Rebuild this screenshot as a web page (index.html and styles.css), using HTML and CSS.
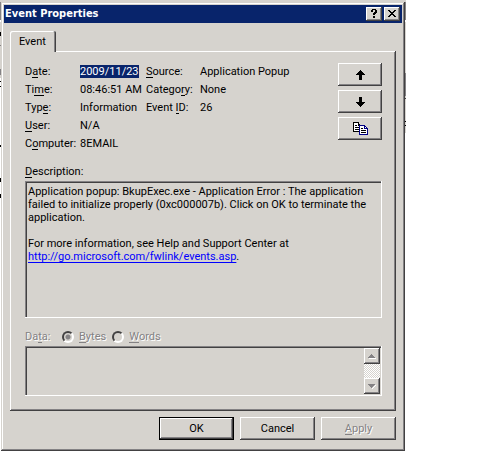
FILE: index.html
```html
<!DOCTYPE html>
<html lang="en">
<head>
<meta charset="utf-8">
<title>Event Properties</title>
<link rel="stylesheet" href="styles.css">
</head>
<body>
<main class="desktop">
<form class="window">
  <header class="titlebar">
    <h1 class="title">Event Properties</h1>
    <button type="button" class="caption-button" aria-label="Help">
      <svg width="12" height="10" viewBox="0 0 12 10" shape-rendering="crispEdges"><path d="M4 0h4v1h1v3h-1v1h-1v1h-2v-2h1v-1h1v-2h-2v2h-2v-2h1zM5 7h2v2h-2z"/></svg>
    </button>
    <button type="button" class="caption-button" aria-label="Close">
      <svg width="12" height="10" viewBox="0 0 12 10" shape-rendering="crispEdges"><path d="M2 1h2v1h1v1h2v-1h1v-1h2v1h-1v1h-1v1h-1v1h1v1h1v1h1v1h-2v-1h-1v-1h-2v1h-1v1h-2v-1h1v-1h1v-1h1v-1h-1v-1h-1v-1h-1z"/></svg>
    </button>
  </header>
  <div class="content">
    <div class="tabs" role="tablist">
      <button type="button" class="tab" role="tab" aria-selected="true">Event</button>
    </div>
    <section class="panel">
      <div class="summary">
        <dl class="facts">
          <dt>D<u>a</u>te:</dt><dd><span class="selected">2009/11/23</span></dd>
          <dt><u>S</u>ource:</dt><dd>Application Popup</dd>
          <dt>Ti<u>m</u>e:</dt><dd>08:46:51 AM</dd>
          <dt>Catego<u>r</u>y:</dt><dd>None</dd>
          <dt>Typ<u>e</u>:</dt><dd>Information</dd>
          <dt>Event <u>I</u>D:</dt><dd>26</dd>
          <dt><u>U</u>ser:</dt><dd class="wide">N/A</dd>
          <dt>C<u>o</u>mputer:</dt><dd class="wide">8EMAIL</dd>
        </dl>
        <div class="tools">
          <button type="button" class="button" aria-label="Previous event">
            <svg width="9" height="10" viewBox="0 0 9 10" shape-rendering="crispEdges"><path d="M4 0h1v1h1v1h1v1h1v1h1v1h-3v5h-3v-5h-3v-1h1v-1h1v-1h1v-1h1z"/></svg>
          </button>
          <button type="button" class="button" aria-label="Next event">
            <svg width="9" height="10" viewBox="0 0 9 10" shape-rendering="crispEdges"><path d="M3 0h3v5h3v1h-1v1h-1v1h-1v1h-1v1h-1v-1h-1v-1h-1v-1h-1v-1h-1v-1h3z"/></svg>
          </button>
          <button type="button" class="button" aria-label="Copy">
            <svg width="15" height="13" viewBox="0 0 15 13" shape-rendering="crispEdges">
              <path fill="#fff" d="M1 1h4v2h2v6h-6z"/>
              <path d="M0 0h6v1h-5v8h5v1h-6zM5 1h1v1h1v1h1v1h-3zM2 3h2v1h-2zM2 5h4v1h-4zM2 7h4v1h-4z"/>
              <path fill="#fff" d="M7 4h4v3h3v5h-7z"/>
              <path fill="#000084" d="M6 3h6v1h-5v8h7v-6h1v7h-9zM11 4h2v1h1v1h1v1h-4z"/>
              <path fill="#fff" d="M12 5h1v1h-1z"/>
              <path d="M8 6h2v1h-2zM8 8h5v1h-5zM8 10h5v1h-5z"/>
            </svg>
          </button>
        </div>
      </div>
      <h2 class="label" id="description"><u>D</u>escription:</h2>
      <div class="description" role="document" aria-labelledby="description">
        <p>Application popup: BkupExec.exe - Application Error : The application<br>failed to initialize properly (0xc000007b). Click on OK to terminate the<br>application.</p>
        <p>For more information, see Help and Support Center at<br><a href="http://go.microsoft.com/fwlink/events.asp">http://go.microsoft.com/fwlink/events.asp</a>.</p>
      </div>
      <div class="data-options">
        <label class="data-label" for="data">Da<u>t</u>a:</label>
        <label class="option"><input type="radio" name="format" checked disabled><span><u>B</u>ytes</span></label>
        <label class="option"><input type="radio" name="format" disabled><span><u>W</u>ords</span></label>
      </div>
      <div class="data-box">
        <textarea id="data" class="data" disabled></textarea>
        <div class="scrollbar">
          <button type="button" class="scroll-button" aria-label="Scroll up" disabled>
            <svg width="8" height="5" viewBox="0 0 8 5" shape-rendering="crispEdges"><path fill="#fff" d="M1 4h7v1h-7z"/><path fill="#848284" d="M3 0h1v1h1v1h1v1h1v1h-7v-1h1v-1h1v-1h1z"/></svg>
          </button>
          <button type="button" class="scroll-button" aria-label="Scroll down" disabled>
            <svg width="8" height="5" viewBox="0 0 8 5" shape-rendering="crispEdges"><path fill="#fff" d="M4 5v-1h1v-1h1v-1h1v-1h1v1h-1v1h-1v1h-1v1z"/><path fill="#848284" d="M0 0h7v1h-1v1h-1v1h-1v1h-1v-1h-1v-1h-1v-1h-1z"/></svg>
          </button>
        </div>
      </div>
    </section>
    <footer class="actions">
      <button type="submit" class="button default">OK</button>
      <button type="button" class="button">Cancel</button>
      <button type="button" class="button" disabled><span><u>A</u>pply</span></button>
    </footer>
  </div>
</form>
</main>
</body>
</html>
```
FILE: styles.css
```css
:root {
  --face: #d6d3ce;
  --light: #fff;
  --shadow: #848284;
  --dark: #424142;
  --navy: #08246b;
}

* { box-sizing: border-box; }

body {
  margin: 0;
  background: #fff;
  color: #000;
  font: 11px/18px Roboto, "Liberation Sans", sans-serif;
}

h1, h2, p, dl, dd { margin: 0; font-size: inherit; font-weight: normal; }
button, textarea, input { font: inherit; color: inherit; margin: 0; padding: 0; border-radius: 0; }
svg { display: block; }

/* Access-key underline */
u {
  display: inline-block;
  border-bottom: 1px solid;
  line-height: 10px;
  text-decoration: none;
}

a {
  text-decoration-thickness: 1px;
  text-underline-offset: 2px;
  text-decoration-skip-ink: none;
}

/* Slivers of the window behind show around the dialog. */
.desktop {
  margin-right: 84px;
  padding: 2px 1px 1px;
  background:
    linear-gradient(#000, #000) 0 32px / 1px 4px,
    linear-gradient(#000, #000) 0 81px / 1px 1px,
    linear-gradient(#000, #000) 0 86px / 1px 1px,
    linear-gradient(#000, #000) 0 145px / 1px 2px,
    linear-gradient(#000, #000) 0 178px / 1px 4px,
    linear-gradient(#000, #000) 0 194px / 1px 4px,
    linear-gradient(#848284, #848284) 0 2px / 1px 18px,
    linear-gradient(#848284, #848284) 0 45px / 1px 1px,
    linear-gradient(#848284, #848284) 0 69px / 1px 6px,
    linear-gradient(#d6d3ce, #d6d3ce) 0 22px / 1px 56px,
    linear-gradient(#848284, #848284) 100% 2px / 1px 18px,
    linear-gradient(#848284, #848284) 100% 73px / 1px 23px,
    linear-gradient(#424142, #424142) 100% 98px / 1px 1px,
    linear-gradient(#000, #000) 100% 121px / 1px 1px,
    linear-gradient(#000, #000) 100% 125px / 1px 1px,
    linear-gradient(#d6d3ce, #d6d3ce) 100% 22px / 1px 111px,
    linear-gradient(#d6d3ce, #d6d3ce) 0 0 / 100% 2px,
    linear-gradient(#d6d3ce, #d6d3ce) 0 100% / 100% 1px,
    #fff;
  background-repeat: no-repeat;
}

.window {
  padding: 3px;
  background: var(--face);
  box-shadow: inset -1px -1px var(--dark), inset 1px 1px var(--face),
    inset -2px -2px var(--shadow), inset 2px 2px var(--light);
}

.titlebar {
  display: flex;
  align-items: center;
  gap: 2px;
  height: 18px;
  padding: 0 2px 0 1px;
  background: var(--navy);
  color: #fff;
}

.title {
  flex: 1;
  font: bold 11px/18px "DejaVu Sans Condensed", "DejaVu Sans", sans-serif;
}

.button, .caption-button, .scroll-button {
  display: flex;
  align-items: center;
  justify-content: center;
  border: 0;
  background: var(--face);
  box-shadow: inset -1px -1px var(--dark), inset 1px 1px var(--light), inset -2px -2px var(--shadow);
}

.caption-button { width: 16px; height: 14px; padding: 0 1px 1px 0; color: #000; }

.content { padding: 8px 6px 8px; }

.tabs { display: flex; }

.tab {
  height: 21px;
  margin-bottom: -1px;
  padding: 0 10px 0 9px;
  border: 0;
  border-radius: 2px 2px 0 0;
  background: var(--face);
  box-shadow: inset -1px 0 var(--dark), inset 1px 1px var(--light), inset -2px 0 var(--shadow);
  position: relative;
}

.panel {
  padding: 12px 14px 15px 15px;
  box-shadow: inset -1px -1px var(--dark), inset 1px 1px var(--light), inset -2px -2px var(--shadow);
}

.summary { display: flex; justify-content: space-between; }

.facts {
  display: grid;
  grid-template-columns: 55px 66px 54px auto;
  align-content: start;
  white-space: nowrap;
}

.wide { grid-column: 2 / -1; }

.selected { display: inline-block; line-height: 13px; background: var(--navy); color: #fff; }

.tools { display: grid; gap: 4px; align-content: start; }
.tools .button { width: 44px; }

.button { height: 23px; }

.label { margin-top: 10px; line-height: 18px; }

.description {
  min-height: 137px;
  padding: 4px 3px;
  line-height: 13px;
}

.description, .data-box {
  box-shadow: inset -1px -1px var(--light), inset 1px 1px var(--shadow), inset 2px 2px var(--dark);
}

.description p + p { margin-top: 13px; }
.description a { color: #00f; }

.data-options {
  display: flex;
  align-items: center;
  gap: 6px;
  margin-top: 10px;
  color: var(--shadow);
  text-shadow: 1px 1px var(--light);
}

.data-label { width: 31px; }
.option { display: flex; align-items: center; gap: 5px; }

.option input {
  appearance: none;
  width: 12px;
  height: 12px;
  border: 2px solid;
  border-color: var(--dark) var(--light) var(--light) var(--dark);
  border-radius: 50%;
}

.option input:checked { background: radial-gradient(circle, var(--shadow) 2px, transparent 3px); }

.data-box { display: flex; min-height: 50px; padding: 2px; }

.data {
  flex: 1;
  min-width: 0;
  height: 46px;
  border: 0;
  resize: none;
  background: transparent;
}

.scrollbar {
  display: flex;
  flex-direction: column;
  justify-content: space-between;
  width: 16px;
  background: repeating-conic-gradient(#fff 0 25%, var(--face) 0 50%) 0 0 / 2px 2px;
}

.scroll-button { width: 16px; height: 16px; }

.actions {
  display: flex;
  justify-content: flex-end;
  gap: 6px;
  margin-top: 6px;
}

.actions .button { width: 75px; }

.default {
  box-shadow: inset 0 0 0 1px #000, inset -2px -2px var(--dark), inset 2px 2px var(--light), inset -3px -3px var(--shadow);
}

.button:disabled { color: var(--shadow); text-shadow: 1px 1px var(--light); }
```
